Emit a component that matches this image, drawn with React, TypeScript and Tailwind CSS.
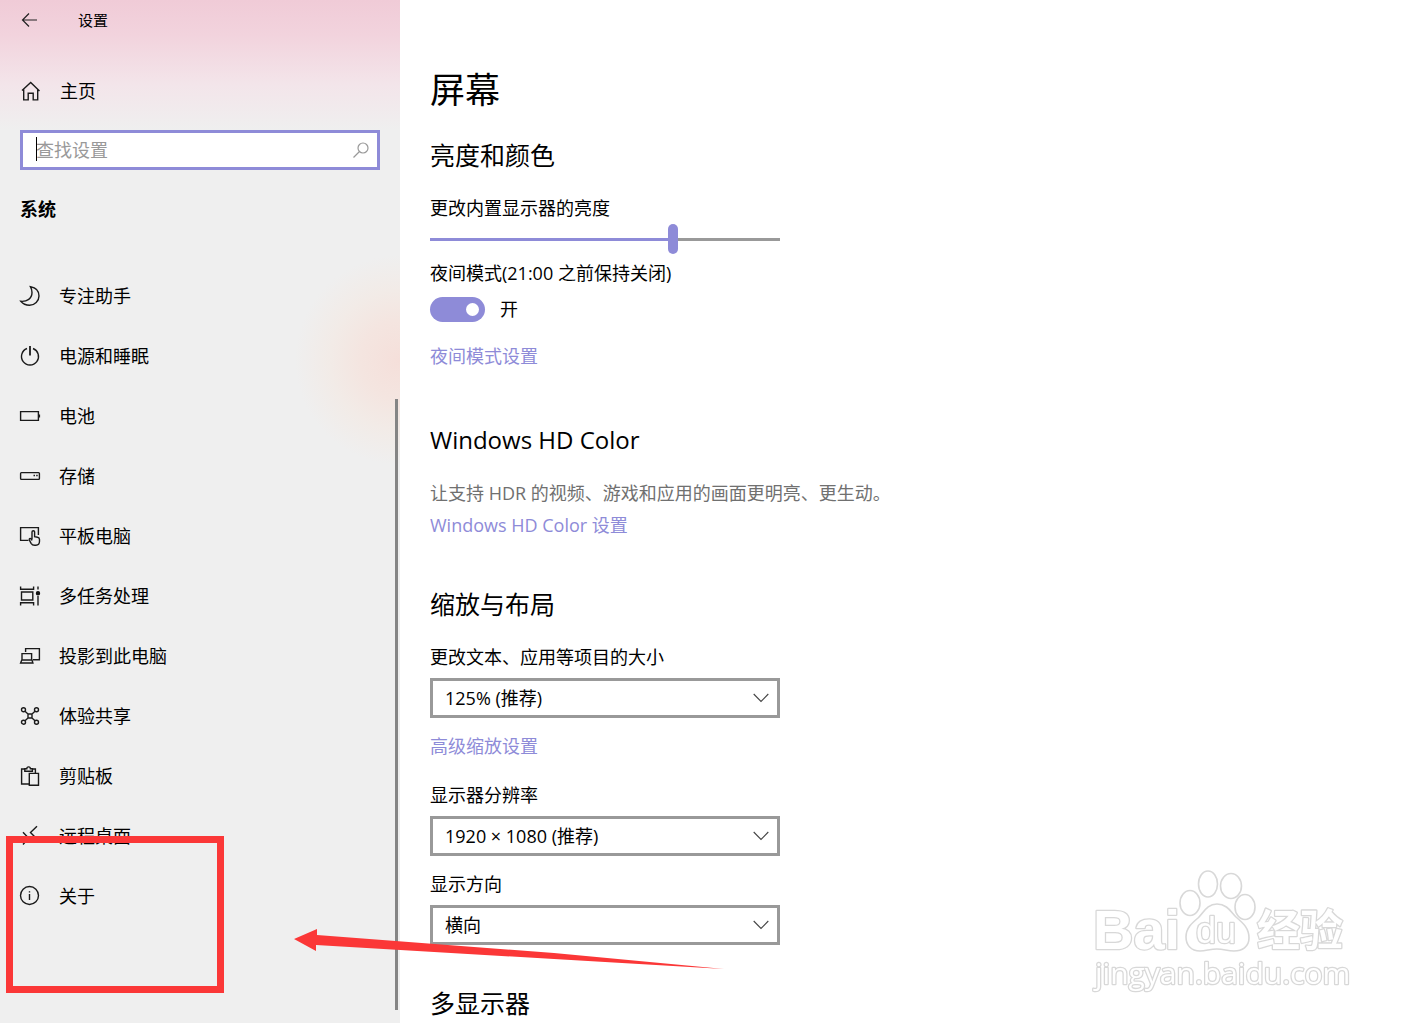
import React from "react";

const FONT = "font-['Open_Sans','Noto_Sans_CJK_SC',sans-serif]";

function Icon({ children }: { children: React.ReactNode }) {
  return (
    <svg
      aria-hidden="true"
      viewBox="0 0 20 20"
      className="h-5 w-5 shrink-0 overflow-visible"
      fill="none"
      stroke="#1a1a1a"
      strokeWidth="1.4"
    >
      {children}
    </svg>
  );
}

const items: { label: string; icon: React.ReactNode }[] = [
  {
    label: "专注助手",
    icon: <path d="M10.500.8C16 1.800 19 5.500 19 10A9.400 9.400 0 0 1 9.600 19.300C6 19.300 2.800 17.800.8 15.300 7 15.800 12 12.500 12 6.500 12 4.500 11.500 2.500 10.500.8Z" />,
  },
  {
    label: "电源和睡眠",
    icon: (
      <>
        <path d="M7 2.500a8.500 8.500 0 1 0 6 0" />
        <path d="M10 0v9.500" strokeWidth="1.800" />
      </>
    ),
  },
  {
    label: "电池",
    icon: (
      <>
        <path d="M.6 5.600h17.800v8.800H.6z" />
        <path d="M19.300 8.500v3" strokeWidth="1.600" />
      </>
    ),
  },
  {
    label: "存储",
    icon: (
      <>
        <rect x=".6" y="6.600" width="18.800" height="6.800" rx=".8" />
        <path d="M13.500 9.500H15M16.200 9.500h1.500" />
      </>
    ),
  },
  {
    label: "平板电脑",
    icon: (
      <>
        <path d="M8.500 14.400H.6V1.600h17.800V9" />
        <path d="M12 13.500V6a1.300 1.300 0 0 1 2.600 0v4.700l3 .6c1.200.2 1.900 1 1.900 2.200v1.800c0 2.300-1.400 3.900-3.600 3.900h-1.300c-1.600 0-2.700-.6-3.500-1.900l-1.700-3.200c-.6-1.200.7-2.200 1.600-1.200L12 14.500" />
      </>
    ),
  },
  {
    label: "多任务处理",
    icon: (
      <>
        <path d="M.6.5v2.800h13V.5M1.500 6h11.300v8H1.500zM.6 19.500v-2.800h13v2.800M18 .5v3M18 10v9.500" />
        <circle cx="18" cy="7.200" r="1.500" fill="#111" stroke="#111" />
      </>
    ),
  },
  {
    label: "投影到此电脑",
    icon: (
      <>
        <path d="M5.600 6V2.600h13.800v11.200H13" />
        <path d="M2 14V7.600h9.600V14M1.800 14h10.200l.9 3H.6z" />
      </>
    ),
  },
  {
    label: "体验共享",
    icon: (
      <>
        <circle cx="3.500" cy="3.800" r="2" />
        <circle cx="16.500" cy="3.800" r="2" />
        <circle cx="3.500" cy="16.200" r="2" />
        <circle cx="16.500" cy="16.200" r="2" />
        <path d="M8 8h4v4H8zM5 5.300 8 8M15 5.300 12 8M5 14.700 8 12M15 14.700 12 12" />
      </>
    ),
  },
  {
    label: "剪贴板",
    icon: (
      <>
        <path d="M9 18H1.600V3H5M12 3h3.400v4.300" />
        <path d="M4.800 5.200V2.700h2a1.800 1.800 0 0 1 3.600 0h2v2.500zM9.300 7.400h9.200v11.900H9.300z" />
      </>
    ),
  },
  {
    label: "远程桌面",
    icon: <path d="M17 .3 10.500 6.500 17 13M3 6.200 8.500 12 3 18.500" />,
  },
  {
    label: "关于",
    icon: (
      <>
        <circle cx="9.500" cy="9.500" r="9" />
        <path d="M9.500 8v6M9.500 5.300v1.200" />
      </>
    ),
  },
];

function Field({ id, label, value }: { id: string; label: string; value: string }) {
  return (
    <div className="w-[350px] max-w-full">
      <label htmlFor={id} className="block h-[26px] leading-[26px]">
        {label}
      </label>
      <div className="relative mt-2">
        <select
          id={id}
          className="block h-10 w-full appearance-none border-[3px] border-[#999] bg-white px-3 text-[18px] leading-[26px] text-black outline-none"
        >
          <option>{value}</option>
        </select>
        <svg
          aria-hidden="true"
          viewBox="0 0 16 10"
          className="pointer-events-none absolute top-[15px] right-[11px] h-[10px] w-4"
          fill="none"
          stroke="#444"
          strokeWidth="1.100"
        >
          <path d="M.7 1 8 8.500 15.300 1" />
        </svg>
      </div>
    </div>
  );
}

function Sidebar() {
  return (
    <aside className="relative w-[400px] shrink-0 bg-[#efefef] bg-[radial-gradient(circle_at_400px_360px,#f5dfda_0px,#f4e5e0_40px,#f2ebe7_70px,#efefef00_105px),linear-gradient(180deg,#f0cbd7_0px,#f2d3dd_35px,#f3e5ea_85px,#efefef00_130px)] px-5">
      <header className="flex h-10 items-center">
        <button type="button" aria-label="返回">
          <svg viewBox="0 0 20 20" className="h-5 w-5" fill="none" stroke="#222" strokeWidth="1.200">
            <path d="M9 3.500 2.500 10 9 16.500M2.500 10H17" />
          </svg>
        </button>
        <h1 className="ml-[38px] text-[15px] leading-5">设置</h1>
      </header>
      <a href="#home" className="mt-5 flex h-[62px] items-center gap-5">
        <Icon>
          <path d="M2 9.500 10.700 1.500 19.500 10M3.700 8.500v10.400h4.500v-6.600h5v6.600h4.500V8.500" />
        </Icon>
        主页
      </a>
      <div className="relative mt-2">
        <input
          type="text"
          aria-label="查找设置"
          placeholder="查找设置"
          className="block h-10 w-full border-[3px] border-[#8e8bd8] bg-white pr-10 pl-[13px] text-[18px] leading-[26px] outline-none placeholder:text-[#999]"
        />
        <span className="absolute top-[7px] left-4 h-6 w-px bg-black" />
        <svg
          aria-hidden="true"
          viewBox="0 0 16 16"
          className="absolute top-3 right-[11px] h-4 w-4"
          fill="none"
          stroke="#999"
          strokeWidth="1.200"
        >
          <circle cx="10" cy="6" r="5" />
          <path d="M6.500 9.500.5 15.500" />
        </svg>
      </div>
      <h2 className="mt-6 h-[30px] font-bold leading-[30px]">系统</h2>
      <nav className="mt-[42px]">
        {items.map((item) => (
          <a key={item.label} href="#settings" className="flex h-[60px] items-center gap-[19px]">
            <Icon>{item.icon}</Icon>
            {item.label}
          </a>
        ))}
      </nav>
      <div className="absolute top-[399px] right-[2px] bottom-[13px] w-[3px] bg-[#858585]" />
    </aside>
  );
}

function Display() {
  const heading = "h-9 leading-9";
  const link = "block h-[26px] w-fit leading-[26px] text-[#8e8bd8]";
  return (
    <main className="min-w-0 flex-1 px-[30px] pt-16">
      <h1 className="h-[52px] text-[35px] leading-[52px]">屏幕</h1>
      <section className="mt-[21px]">
        <h2 className={`text-[25px] ${heading}`}>亮度和颜色</h2>
        <label htmlFor="brightness" className="mt-[22px] block h-[26px] leading-[26px]">
          更改内置显示器的亮度
        </label>
        <input
          id="brightness"
          type="range"
          defaultValue={70}
          className="mt-[3px] block h-[30px] w-[350px] max-w-full appearance-none bg-transparent outline-none [&::-webkit-slider-runnable-track]:h-[3px] [&::-webkit-slider-runnable-track]:bg-[linear-gradient(90deg,#8e8bd8_70%,#999_70%)] [&::-webkit-slider-thumb]:-mt-[14px] [&::-webkit-slider-thumb]:h-[30px] [&::-webkit-slider-thumb]:w-[10px] [&::-webkit-slider-thumb]:appearance-none [&::-webkit-slider-thumb]:rounded-full [&::-webkit-slider-thumb]:bg-[#8e8bd8]"
        />
        <p id="night" className="mt-[6px] h-[26px] leading-[26px]">
          夜间模式(21:00 之前保持关闭)
        </p>
        <label className="mt-[10px] flex h-[26px] w-fit items-center gap-[15px]">
          <input type="checkbox" role="switch" aria-labelledby="night" defaultChecked className="peer sr-only" />
          <span className="flex h-[25px] w-[55px] items-center rounded-full bg-[#8e8bd8] px-[6px] peer-checked:justify-end">
            <span className="h-[13px] w-[13px] rounded-full bg-white" />
          </span>
          开
        </label>
        <a href="#night-settings" className={`mt-[21px] ${link}`}>
          夜间模式设置
        </a>
      </section>
      <section className="mt-[53px]">
        <h2 className={`text-[24px] ${heading}`}>Windows HD Color</h2>
        <p className="mt-[22px] h-[26px] leading-[26px] text-[#707070]">让支持 HDR 的视频、游戏和应用的画面更明亮、更生动。</p>
        <a href="#hd-color" className={`mt-[6px] ${link}`}>
          Windows HD Color 设置
        </a>
      </section>
      <section className="mt-[48px]">
        <h2 className={`mb-[22px] text-[25px] ${heading}`}>缩放与布局</h2>
        <Field id="scale" label="更改文本、应用等项目的大小" value="125% (推荐)" />
        <a href="#scaling" className={`mt-[15px] mb-[23px] ${link}`}>
          高级缩放设置
        </a>
        <div className="flex flex-col gap-[15px]">
          <Field id="resolution" label="显示器分辨率" value="1920 × 1080 (推荐)" />
          <Field id="orientation" label="显示方向" value="横向" />
        </div>
      </section>
      <section className="mt-[40px]">
        <h2 className={`text-[25px] ${heading}`}>多显示器</h2>
      </section>
    </main>
  );
}

function Watermark() {
  return (
    <svg
      aria-label="Baidu 经验 jingyan.baidu.com"
      viewBox="0 0 280 140"
      className="pointer-events-none absolute top-[860px] right-[65px] h-[140px] w-[280px]"
      fill="#fff"
      stroke="#d8d8d8"
      strokeWidth="1.600"
      strokeLinejoin="round"
    >
      <defs>
        <filter id="soft" x="-5%" y="-5%" width="110%" height="110%">
          <feGaussianBlur stdDeviation="0.5" />
        </filter>
      </defs>
      <g filter="url(#soft)">
        <ellipse cx="110" cy="43" rx="10" ry="12.500" />
        <ellipse cx="128" cy="24" rx="9.500" ry="13" />
        <ellipse cx="151" cy="26" rx="10.500" ry="12.500" />
        <ellipse cx="165" cy="47" rx="10" ry="12.500" />
        <path d="M137 44c10 0 14 8 19 13 7 6 13 11 13 21 0 9-7 13-15 13-7 0-10-2-17-2s-11 2-17 2c-9 0-14-6-14-14 0-9 6-14 12-19 6-6 9-14 19-14Z" />
        <g style={{ paintOrder: "stroke" }} strokeWidth="2.600">
          <text x="13" y="89" fontFamily="Liberation Sans" fontWeight="700" fontSize="56">
            Bai
          </text>
          <text x="116" y="83" fontFamily="Liberation Sans" fontSize="36">
            du
          </text>
          <text x="177" y="86" fontFamily="Noto Sans CJK SC" fontWeight="700" fontSize="43">
            经验
          </text>
          <text x="15" y="124" fontFamily="Open Sans" fontSize="30">
            jingyan.baidu.com
          </text>
        </g>
      </g>
    </svg>
  );
}

export default function App() {
  return (
    <div className={`relative flex min-h-screen overflow-hidden bg-white text-[18px] leading-[26px] text-black ${FONT}`}>
      <Sidebar />
      <Display />
      <Watermark />
      <div className="pointer-events-none absolute top-[836px] left-[6px] h-[157px] w-[218px] border-[7px] border-[#fb3737]" />
      <svg
        aria-hidden="true"
        viewBox="0 0 430 42"
        className="pointer-events-none absolute top-[929px] left-[294px] h-[42px] w-[430px]"
        fill="#fb3737"
      >
        <path d="M0 10 23 0V6L260 24 430 40 260 30 22 16V22Z" />
      </svg>
    </div>
  );
}
